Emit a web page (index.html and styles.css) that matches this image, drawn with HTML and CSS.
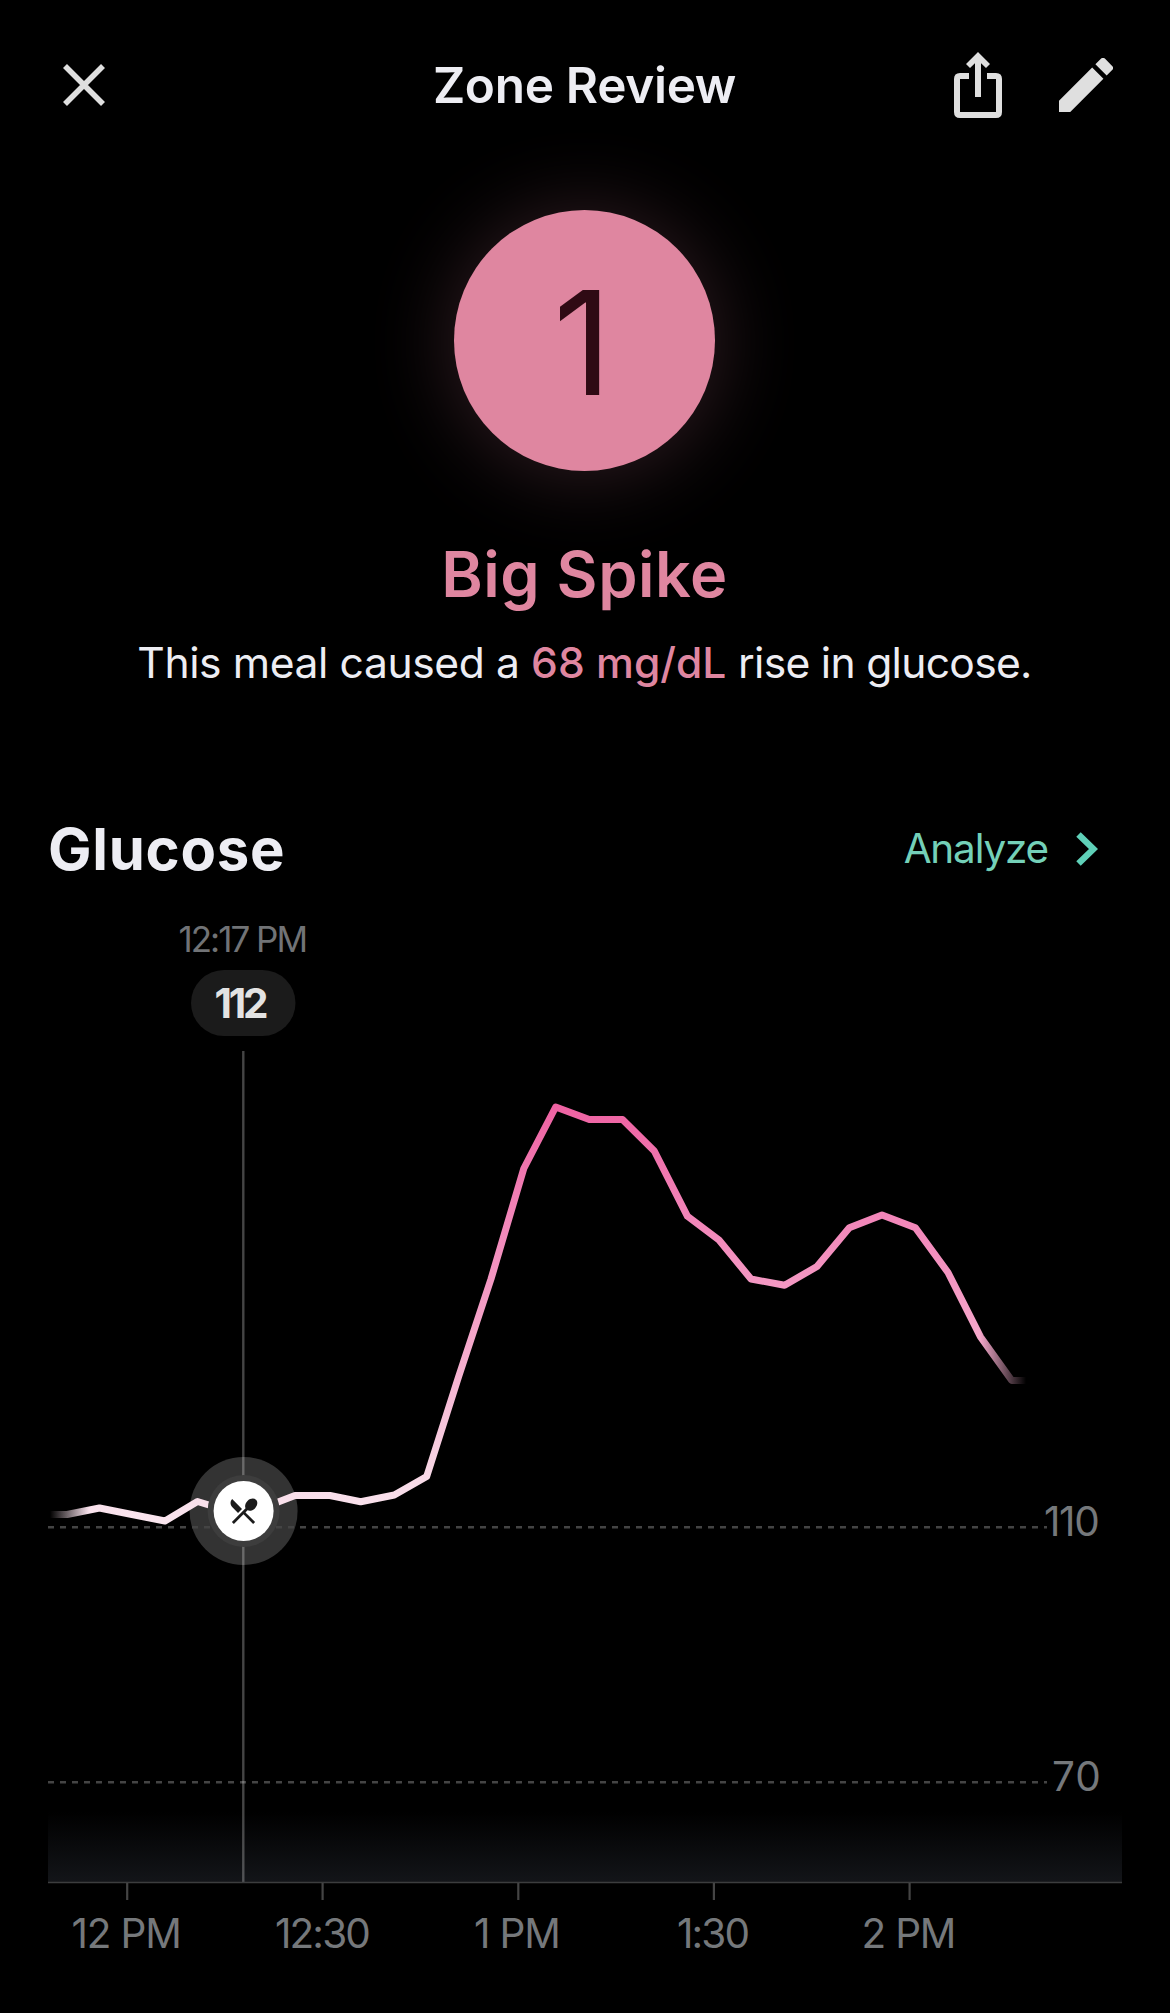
FILE: index.html
```html
<!DOCTYPE html>
<html lang="en">
<head>
<meta charset="utf-8">
<title>Zone Review</title>
<link rel="stylesheet" href="styles.css">
</head>
<body>
<header class="topbar">
  <button class="icon-button" aria-label="Close">
    <svg class="icon-close" viewBox="0 0 42 42"><path d="M2 2 40 40M40 2 2 40"/></svg>
  </button>
  <h1 class="topbar-title">Zone Review</h1>
  <div class="topbar-actions">
    <button class="icon-button" aria-label="Share">
      <svg class="icon-share" viewBox="0 0 48 66">
        <path class="icon-line" d="M15 24H6Q3 24 3 27V60Q3 63 6 63H42Q45 63 45 60V27Q45 24 42 24H33M24 45V6"/>
        <path class="icon-fill" d="M24 0 36 12 32 16 24 8.300 16 16 12 12Z"/>
      </svg>
    </button>
    <button class="icon-button" aria-label="Edit">
      <svg class="icon-edit" viewBox="3 3 18 18"><path class="icon-fill" d="M3 17.250V21h3.750L17.810 9.940l-3.750-3.750L3 17.250zM20.710 7.040a1 1 0 0 0 0-1.410l-2.340-2.340a1 1 0 0 0-1.410 0l-1.830 1.830 3.750 3.750 1.830-1.830z"/></svg>
    </button>
  </div>
</header>

<main>
  <section class="score">
    <div class="score-circle"><span class="score-value">1</span></div>
    <h2 class="score-title">Big Spike</h2>
    <p class="score-text">This meal caused a <strong>68 mg/dL</strong> <span class="score-tail">rise in glucose.</span></p>
  </section>

  <section class="glucose">
    <div class="glucose-head">
      <h2 class="glucose-title">Glucose</h2>
      <a class="analyze">Analyze
        <svg class="icon-chevron" viewBox="0 0 22 34"><path d="M2.500 2.500 17.500 17 2.500 31.500"/></svg>
      </a>
    </div>
    <svg class="chart" viewBox="0 900 1170 1113">
      <defs>
        <linearGradient id="line-color" gradientUnits="userSpaceOnUse" x1="0" y1="1105" x2="0" y2="1525">
          <stop offset="0" stop-color="#ee62a2"/>
          <stop offset=".27" stop-color="#f286b9"/>
          <stop offset=".6" stop-color="#f5accd"/>
          <stop offset=".9" stop-color="#f8dbe8"/>
          <stop offset="1" stop-color="#fae6ef"/>
        </linearGradient>
        <linearGradient id="fade" gradientUnits="userSpaceOnUse" x1="50" y1="0" x2="1026" y2="0">
          <stop offset="0" stop-color="#000"/>
          <stop offset=".04" stop-color="#fff"/>
          <stop offset=".953" stop-color="#fff"/>
          <stop offset="1" stop-color="#000"/>
        </linearGradient>
        <linearGradient id="floor" x1="0" y1="0" x2="0" y2="1">
          <stop offset="0" stop-color="#131519" stop-opacity="0"/>
          <stop offset="1" stop-color="#131519"/>
        </linearGradient>
        <mask id="ends" maskUnits="userSpaceOnUse" x="0" y="900" width="1170" height="1113">
          <rect x="50" y="900" width="976" height="1113" fill="url(#fade)"/>
        </mask>
      </defs>

      <text class="time" x="178.500" y="952">12:17 PM</text>
      <rect class="pill" x="191" y="970" width="104.500" height="66" rx="33"/>
      <text class="reading" x="214.500" y="1018">112</text>

      <rect x="48" y="1812" width="1074" height="70" fill="url(#floor)"/>
      <circle class="marker-halo" cx="243.600" cy="1511" r="54"/>
      <path class="threshold" d="M48 1527.300H1047M48 1782.300H1047"/>
      <path class="cursor" d="M243.300 1051V1882"/>
      <path class="axis" d="M48 1882.500H1122"/>
      <path class="tick" d="M127.200 1883V1900M322.600 1883V1900M518.300 1883V1900M713.900 1883V1900M909.600 1883V1900"/>

      <g mask="url(#ends)">
        <polyline class="series" points="50,1514.500 67,1514.500 99.500,1508 132,1514.500 165,1521 197.500,1501.500 230,1511.500 262.500,1508 295,1495.500 330,1495.500 360.700,1501.700 394.300,1495 426.700,1476.500 458.500,1377 491,1279 523.800,1168.500 555.700,1107 589.300,1119.500 622.500,1119.500 654.300,1151 687.500,1216.300 719,1240 751,1279 784.600,1285.300 817,1266.500 849.300,1227.700 882,1215 915.400,1227.700 948,1272.500 980.400,1336.700 1011.800,1380.500 1027,1380.500"/>
      </g>

      <circle class="marker-ring" cx="243.600" cy="1511" r="36"/>
      <circle class="marker-dot" cx="243.600" cy="1511" r="30"/>
      <path class="marker-icon" transform="translate(226.700 1494.200) scale(1.400)" d="M8.100 13.340l2.830-2.830L3.910 3.500c-1.560 1.560-1.560 4.090 0 5.660l4.190 4.180zm6.780-1.810c1.530.71 3.680.21 5.270-1.380 1.910-1.910 2.280-4.650.81-6.120-1.460-1.460-4.200-1.100-6.120.81-1.590 1.590-2.090 3.740-1.380 5.270L3.700 19.870l1.410 1.410L12 14.410l6.880 6.880 1.410-1.410L13.410 13l1.470-1.470z"/>

      <g class="labels">
        <text class="label-110" x="1044" y="1536">110</text>
        <text class="label-70" x="1052" y="1791.300">70</text>
        <text class="hour" x="71.500" y="1948">12 PM</text>
        <text class="half" x="275" y="1948">12:30</text>
        <text class="hour" x="474" y="1948">1 PM</text>
        <text class="half" x="677" y="1948">1:30</text>
        <text class="hour" x="861.500" y="1948">2 PM</text>
      </g>
    </svg>
  </section>
</main>
</body>
</html>
```
FILE: styles.css
```css
* { box-sizing: border-box; }

body {
  margin: 0;
  background: #000;
  color: #ededf3;
  font-family: Inter, "Liberation Sans", sans-serif;
}

h1, h2, p { margin: 0; }

svg { display: block; }

.topbar {
  display: grid;
  grid-template-columns: 1fr auto 1fr;
  align-items: center;
  height: 168px;
  padding: 1px 57px 0 63px;
}

.topbar-title {
  font-size: 49.5px;
  font-weight: 600;
  line-height: 60px;
  letter-spacing: -0.3px;
  transform: translateX(-3.5px);
}

.topbar-actions {
  display: flex;
  align-items: center;
  justify-content: flex-end;
  gap: 57px;
}

.icon-button {
  padding: 0;
  border: 0;
  background: none;
  color: #dfdfdf;
}

.icon-close {
  width: 42px;
  height: 42px;
  fill: none;
  stroke: currentColor;
  stroke-width: 5.6;
}

.icon-share { width: 48px; height: 66px; }
.icon-edit { width: 54px; height: 54px; }
.icon-line { fill: none; stroke: currentColor; stroke-width: 6; }
.icon-fill { fill: currentColor; }

.score {
  display: flex;
  flex-direction: column;
  align-items: center;
  padding: 42px 1px 0 0;
}

.score-circle {
  display: flex;
  align-items: center;
  justify-content: center;
  width: 261px;
  height: 261px;
  padding: 4px 4px 0 0;
  border-radius: 50%;
  background: #df86a0;
  box-shadow: 0 2px 84px rgba(223, 134, 160, 0.23);
}

.score-value {
  color: #2f0a14;
  font-size: 144px;
  font-weight: 400;
  line-height: 150px;
}

.score-title {
  margin-top: 63px;
  color: #df86a0;
  font-size: 63px;
  font-weight: 600;
  line-height: 80px;
  letter-spacing: 0.55px;
}

.score-text {
  margin-top: 23px;
  font-size: 42.6px;
  font-weight: 400;
  line-height: 52px;
  letter-spacing: -0.4px;
  white-space: nowrap;
}

.score-text strong {
  color: #df86a0;
  font-weight: 500;
  letter-spacing: 0;
}

.score-tail { letter-spacing: -0.7px; }

.glucose { margin-top: 125px; }

.glucose-head {
  display: flex;
  align-items: center;
  justify-content: space-between;
  height: 70px;
  padding: 0 71px 0 48px;
}

.glucose-title {
  font-size: 58px;
  font-weight: 700;
  line-height: 70px;
  letter-spacing: 0.75px;
}

.analyze {
  display: flex;
  align-items: center;
  gap: 28px;
  color: #74d0b8;
  font-size: 40.5px;
  font-weight: 400;
  line-height: 48px;
  letter-spacing: -1.2px;
}

.icon-chevron {
  width: 22px;
  height: 34px;
  margin-right: 1px;
  fill: none;
  stroke: #5fd0b8;
  stroke-width: 6.4;
}

.chart {
  width: 1170px;
  height: 1113px;
  margin-top: 16px;
}

.time {
  fill: #717376;
  font-size: 35px;
  font-weight: 400;
  letter-spacing: -2px;
}

.pill { fill: #1b1b1b; }

.reading {
  fill: #e3e3e3;
  font-size: 40.5px;
  font-weight: 700;
  letter-spacing: -3.2px;
}

.threshold {
  fill: none;
  stroke: #444;
  stroke-width: 2.5;
  stroke-dasharray: 6 6;
}

.cursor { stroke: rgba(255, 255, 255, 0.27); stroke-width: 2.4; }
.axis { stroke: #3c3d3e; stroke-width: 1.5; }
.tick { fill: none; stroke: #444; stroke-width: 2.2; }

.series {
  fill: none;
  stroke: url(#line-color);
  stroke-width: 7;
  stroke-linejoin: round;
}

.marker-halo { fill: #333; }
.marker-ring { fill: #3d3d3d; }
.marker-dot { fill: #fff; }
.marker-icon { fill: #1b1b1b; }

.labels {
  fill: #75787b;
  font-size: 40.5px;
  font-weight: 400;
}

.hour { letter-spacing: -1.2px; }
.half { letter-spacing: -1.9px; }
.label-110 { letter-spacing: -1.4px; }
.label-70 { letter-spacing: 1px; }
```
